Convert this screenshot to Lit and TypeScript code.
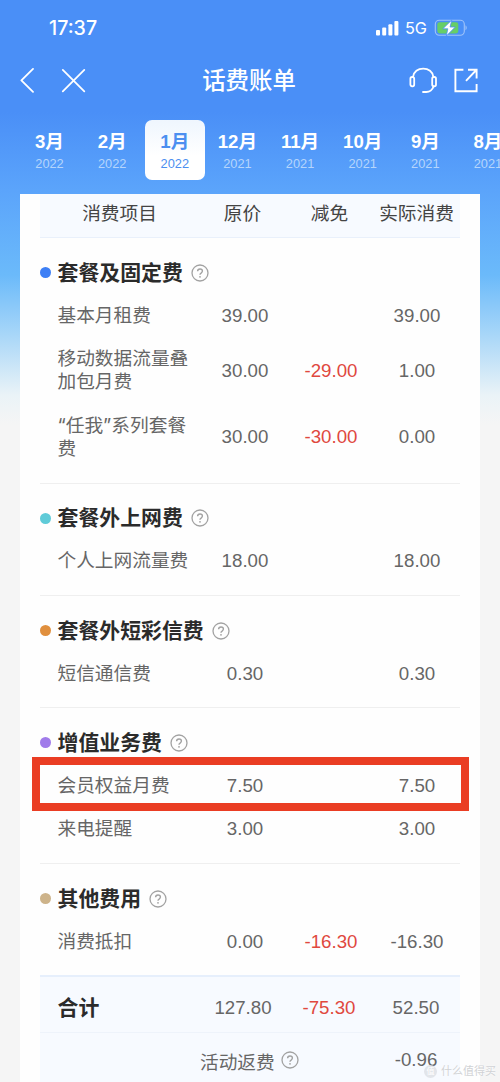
import { LitElement, html, css, nothing } from "lit";
import { customElement, property } from "lit/decorators.js";
import { classMap } from "lit/directives/class-map.js";

interface Fee {
  name: string;
  price: string;
  off?: string;
  paid: string;
  marked?: boolean;
}

interface Section {
  title: string;
  tone: string;
  fees: Fee[];
}

const MONTHS = [
  ["3月", "2022"],
  ["2月", "2022"],
  ["1月", "2022"],
  ["12月", "2021"],
  ["11月", "2021"],
  ["10月", "2021"],
  ["9月", "2021"],
  ["8月", "2021"],
];
const ACTIVE = 2;

const SECTIONS: Section[] = [
  {
    title: "套餐及固定费",
    tone: "blue",
    fees: [
      { name: "基本月租费", price: "39.00", paid: "39.00" },
      { name: "移动数据流量叠加包月费", price: "30.00", off: "-29.00", paid: "1.00" },
      { name: "“任我”系列套餐费", price: "30.00", off: "-30.00", paid: "0.00" },
    ],
  },
  { title: "套餐外上网费", tone: "teal", fees: [{ name: "个人上网流量费", price: "18.00", paid: "18.00" }] },
  { title: "套餐外短彩信费", tone: "orange", fees: [{ name: "短信通信费", price: "0.30", paid: "0.30" }] },
  {
    title: "增值业务费",
    tone: "purple",
    fees: [
      { name: "会员权益月费", price: "7.50", paid: "7.50", marked: true },
      { name: "来电提醒", price: "3.00", paid: "3.00" },
    ],
  },
  { title: "其他费用", tone: "tan", fees: [{ name: "消费抵扣", price: "0.00", off: "-16.30", paid: "-16.30" }] },
];

@customElement("help-icon")
class HelpIcon extends LitElement {
  static styles = css`
    :host { display: block; width: 18px; height: 18px; flex: none; }
    svg { display: block; }
  `;
  render() {
    return html`<svg width="18" height="18" viewBox="0 0 18 18" fill="none" stroke="#a2a2a2">
      <circle cx="9" cy="9" r="8" stroke-width="1.3" />
      <path d="M6.6 7.3C6.6 5.9 7.6 5 9 5s2.4.9 2.4 2.1c0 1-.6 1.5-1.3 2C9.3 9.6 9 10 9 10.8" stroke-width="1.4" />
      <circle cx="9" cy="12.8" r=".9" fill="#a2a2a2" stroke="none" />
    </svg>`;
  }
}

@customElement("fee-section")
class FeeSection extends LitElement {
  @property({ attribute: false }) data!: Section;
  @property({ type: Boolean }) last = false;

  static styles = css`
    :host { display: block; }
    .section { padding: 13.5px 0 12.25px; border-bottom: 1px solid #efefef; }
    .last { border-bottom: 2px solid #e6effc; }
    .head { display: flex; align-items: center; height: 42.3px; }
    .dot { width: 11px; height: 11px; border-radius: 50%; margin-right: 6.5px; }
    .blue { background: #3d7ff5; }
    .teal { background: #5fcbd8; }
    .orange { background: #e08f3d; }
    .purple { background: #a07bea; }
    .tan { background: #cdb38a; }
    .title { font-size: 20.9px; line-height: 30px; font-weight: 700; color: #2b2b2b; margin-right: 8px; white-space: nowrap; }
    .row {
      position: relative; display: grid; grid-template-columns: 162px 86px 86px 86px;
      align-items: center; padding: 10px 0; color: #666; font-size: 18.7px; line-height: 23.3px;
    }
    .name { padding-left: 17.5px; width: 131px; font-family: Inter, "Noto Sans CJK SC", sans-serif; }
    .num { text-align: center; }
    .off { color: #e0483e; }
    .mark { position: absolute; inset: -7px -9px -4px -8px; border: 8px solid #ea3d23; }
  `;

  render() {
    const d = this.data;
    return html`<section class=${classMap({ section: true, last: this.last })}>
      <div class="head">
        <span class="dot ${d.tone}"></span><span class="title">${d.title}</span><help-icon></help-icon>
      </div>
      ${d.fees.map(
        (f) => html`<div class="row">
          <span class="name">${f.name}</span><span class="num">${f.price}</span>
          <span class="num off">${f.off ?? ""}</span><span class="num">${f.paid}</span>
          ${f.marked ? html`<div class="mark"></div>` : nothing}
        </div>`
      )}
    </section>`;
  }
}

@customElement("app-root")
class AppRoot extends LitElement {
  static styles = css`
    :host {
      display: block; position: relative; box-sizing: border-box; width: 500px; height: 1082px; overflow: hidden;
      font-family: "Liberation Sans", "Noto Sans CJK SC", sans-serif;
      background: linear-gradient(#4a8ff7 0, #4a8ff7 112px, #5ba4fb 190px, #6bbafa 275px, #a5d5f8 332px, #eaf3f7 395px, #f5f5f5 425px);
    }
    .status { display: flex; align-items: center; height: 56px; padding: 0 33px 0 49px; color: #fff; }
    .time { font: 500 19.6px/24px Inter, sans-serif; flex: 1; }
    .net { font: 400 16.3px/20px Inter, sans-serif; margin: 0 7px 0 6px; }
    .status svg, .nav svg { display: block; }
    .nav { display: grid; grid-template-columns: 1fr auto 1fr; align-items: center; height: 48px; padding: 0 21px 0 19px; }
    .left { display: flex; gap: 26px; }
    .right { display: flex; justify-content: flex-end; gap: 16px; }
    .heading { color: #fff; font-size: 23.4px; line-height: 34px; font-weight: 500; padding-top: 1px; }
    .months { display: flex; gap: 2.65px; padding: 16px 0 0 19.5px; height: 74px; width: 520px; }
    .month {
      width: 60px; height: 60px; flex: none; box-sizing: border-box; border-radius: 7px; padding-top: 10px;
      text-align: center; color: #fff;
    }
    .active { background: linear-gradient(#eff6fe, #fff 60%); color: #4c8ff0; }
    .m { display: block; font-size: 18.6px; line-height: 24px; font-weight: 700; }
    .y { display: block; font-size: 12.8px; line-height: 19px; color: #b5d5fc; }
    .active .y { color: #4c8ff0; }
    .sheet { margin: 0 20px; padding: 0 20px; background: #fefefe; height: 888px; }
    .cols {
      display: grid; grid-template-columns: 159px 87px 87px 87px; height: 43px;
      background: #f7faff; border-bottom: 1px solid #e9f0fb; text-align: center;
      font-size: 18.7px; line-height: 40px; color: #444; white-space: nowrap;
    }
    .total, .back { background: #f7faff; color: #666; font-size: 18.7px; }
    .total { display: grid; grid-template-columns: 160px 86px 86px 88px; height: 55px; line-height: 61px; border-bottom: 1px solid #eef3fb; text-align: center; }
    .sum { font-size: 20.9px; font-weight: 700; color: #2b2b2b; text-align: left; padding-left: 17.5px; }
    .off { color: #e0483e; }
    .back { display: flex; align-items: center; height: 54px; padding-left: 160px; }
    .back help-icon { margin-left: 6.5px; }
    .refund { margin-left: 95.5px; }
    .brand { position: absolute; right: 4px; bottom: 3px; display: flex; align-items: center; gap: 4px; color: #d0d2d5; font-size: 11px; line-height: 16px; text-shadow: 0 0 1px #fff, 0 0 2px #fff; }
    .seal { width: 13px; height: 13px; border-radius: 50%; background: rgba(222, 225, 230, 0.85); color: #fff; font-size: 8px; line-height: 13px; text-align: center; text-shadow: none; }
  `;

  render() {
    return html`
      <div class="status">
        <span class="time">17:37</span>
        <svg width="24" height="16" viewBox="0 0 24 16" fill="#fff">
          <rect x="1" y="10" width="4" height="5.4" rx="1" /><rect x="7.2" y="7.5" width="4" height="7.9" rx="1" />
          <rect x="13.4" y="4.2" width="4" height="11.2" rx="1" /><rect x="19.4" y="1" width="4" height="14.4" rx="1" />
        </svg>
        <span class="net">5G</span>
        <svg width="33" height="18" viewBox="0 0 33 18">
          <rect x="1.3" y="1.3" width="29" height="15" rx="4" fill="none" stroke="#9fc3f9" stroke-width="1.1" />
          <rect x="3.3" y="3.2" width="21" height="11.2" rx="2.4" fill="#67ce67" />
          <path d="M31.500 6.300c1.600.7 1.600 4.200 0 5z" fill="#9fc3f9" />
          <path d="M17.800 1 8.800 9.800h5L12.300 17 21.300 8h-5.200z" fill="#fff" stroke="#4a8ff7" stroke-width=".8" />
        </svg>
      </div>
      <div class="nav">
        <div class="left">
          <svg width="16" height="26" viewBox="0 0 16 26" fill="none" stroke="#fff" stroke-width="1.8" stroke-linecap="round" stroke-linejoin="round"><path d="M14 1.900 2.400 13.400 14 24.900" /></svg>
          <svg width="26" height="26" viewBox="0 0 26 26" fill="none" stroke="#fff" stroke-width="1.8" stroke-linecap="round"><path d="M1.800 2.900 23.300 24.400M23.300 2.900 1.800 24.400" /></svg>
        </div>
        <div class="heading">话费账单</div>
        <div class="right">
          <svg width="29" height="28" viewBox="0 0 29 28" fill="none" stroke="#fff" stroke-width="1.8" stroke-linecap="round">
            <path d="M4 11C4.600 5.600 9 2.600 14.200 2.600S23.800 5.600 24.400 11" />
            <rect x="1.400" y="11" width="3.800" height="9.300" rx="1.700" /><rect x="23.200" y="11" width="3.800" height="9.300" rx="1.700" />
            <path d="M24.600 20.500c-1.300 3.600-4.300 5.500-7.400 5.500h-3.200" />
          </svg>
          <svg width="25" height="28" viewBox="0 0 25 28" fill="none" stroke="#fff" stroke-width="1.9">
            <path d="M9.400 3.700H1.400V25.300H22.600V17.900M14 3.700h8.600V12.500M22.300 4 12 14.800" />
          </svg>
        </div>
      </div>
      <div class="months">
        ${MONTHS.map(
          ([m, y], i) => html`<div class=${classMap({ month: true, active: i === ACTIVE })}>
            <span class="m">${m}</span><span class="y">${y}</span>
          </div>`
        )}
      </div>
      <div class="sheet">
        <div class="cols"><span>消费项目</span><span>原价</span><span>减免</span><span>实际消费</span></div>
        ${SECTIONS.map((s, i) => html`<fee-section .data=${s} ?last=${i === SECTIONS.length - 1}></fee-section>`)}
        <div class="total">
          <span class="sum">合计</span><span>127.80</span><span class="off">-75.30</span><span>52.50</span>
        </div>
        <div class="back"><span>活动返费</span><help-icon></help-icon><span class="refund">-0.96</span></div>
      </div>
      <div class="brand"><span class="seal">值</span><span>什么值得买</span></div>
    `;
  }
}
